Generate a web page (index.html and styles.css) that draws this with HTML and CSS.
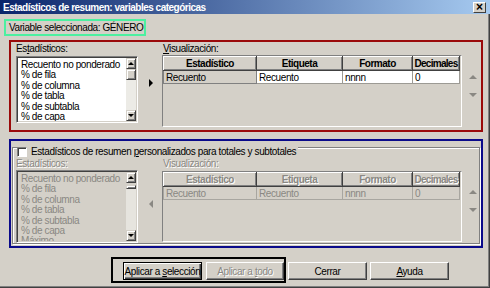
FILE: index.html
```html
<!DOCTYPE html>
<html lang="es">

<head>
    <meta charset="UTF-8">
    <title>Estadísticos de resumen</title>
    <link rel="stylesheet" href="styles.css">
</head>

<body>
    <div class="dialog">
        <div class="titlebar">
            <span class="title">Estadísticos de resumen: variables categóricas</span>
            <span class="close">×</span>
        </div>

        <div class="selected">Variable seleccionada: GÉNERO</div>

        <div class="panel panel-red">
            <div class="stats">
                <div class="label">Es<u>t</u>adísticos:</div>
                <div class="label label-vis"><u>V</u>isualización:</div>

                <div class="list">
                    <div class="items">
                        <div>Recuento no ponderado</div>
                        <div>% de fila</div>
                        <div>% de columna</div>
                        <div>% de tabla</div>
                        <div>% de subtabla</div>
                        <div>% de capa</div>
                        <div>% del N válido de fila</div>
                    </div>
                    <div class="scrollbar">
                        <span class="sbtn"><i class="tri-up"></i></span>
                        <span class="sbtn thumb"></span>
                        <span class="track"></span>
                        <span class="sbtn"><i class="tri-down"></i></span>
                    </div>
                </div>

                <div class="move"><i class="tri-right"></i></div>

                <div class="grid-box">
                    <table class="grid">
                        <tr>
                            <th class="c1">Estadístico</th>
                            <th class="c2">Etiqueta</th>
                            <th class="c3">Formato</th>
                            <th class="c4">Decimales</th>
                        </tr>
                        <tr>
                            <td class="name">Recuento</td>
                            <td>Recuento</td>
                            <td>nnnn</td>
                            <td>0</td>
                        </tr>
                    </table>
                </div>

                <div class="order">
                    <i class="tri-up"></i>
                    <i class="tri-down"></i>
                </div>
            </div>
        </div>

        <div class="panel panel-blue">
            <div class="group">
                <div class="group-head">
                    <span class="check"></span>
                    <span>Estadísticos de resumen <u>p</u>ersonalizados para totales y subtotales</span>
                </div>

                <div class="stats off">
                    <div class="label">Estadísticos:</div>
                    <div class="label label-vis">Visualización:</div>

                    <div class="list">
                        <div class="items">
                            <div>Recuento no ponderado</div>
                            <div>% de fila</div>
                            <div>% de columna</div>
                            <div>% de tabla</div>
                            <div>% de subtabla</div>
                            <div>% de capa</div>
                            <div>Máximo</div>
                        </div>
                        <div class="scrollbar">
                            <span class="sbtn"><i class="tri-up"></i></span>
                            <span class="sbtn thumb thin"></span>
                            <span class="track"></span>
                            <span class="sbtn"><i class="tri-down"></i></span>
                        </div>
                    </div>

                    <div class="move"><i class="tri-left"></i></div>

                    <div class="grid-box">
                        <table class="grid">
                            <tr>
                                <th class="c1">Estadístico</th>
                                <th class="c2">Etiqueta</th>
                                <th class="c3">Formato</th>
                                <th class="c4">Decimales</th>
                            </tr>
                            <tr>
                                <td class="name">Recuento</td>
                                <td>Recuento</td>
                                <td>nnnn</td>
                                <td>0</td>
                            </tr>
                        </table>
                    </div>

                    <div class="order">
                        <i class="tri-up"></i>
                        <i class="tri-down"></i>
                    </div>
                </div>
            </div>
        </div>

        <div class="buttons">
            <div class="apply-box">
                <button class="btn default">Aplicar a <u>s</u>elección</button>
                <button class="btn" disabled>Aplicar a <u>t</u>odo</button>
            </div>
            <button class="btn">Cerrar</button>
            <button class="btn"><u>A</u>yuda</button>
        </div>
    </div>
</body>

</html>
```

FILE: styles.css
```css
* {
    box-sizing: border-box;
}

body {
    margin: 0;
    background: #d4d0c8;
    font-family: "Liberation Sans", Arial, sans-serif;
    font-size: 10px;
    letter-spacing: -0.4px;
    color: #000;
}

.dialog {
    width: 490px;
    height: 288px;
    box-shadow: inset -1px -1px #404040, inset -2px -2px #808080;
}

/* title bar */
.titlebar {
    height: 14px;
    display: flex;
    align-items: center;
    justify-content: space-between;
    padding: 0 4px 0 3px;
    background: linear-gradient(to right, #0a246a, #a6caf0);
}

.title {
    color: #fff;
    font-weight: bold;
    letter-spacing: -0.5px;
}

.close {
    width: 13px;
    height: 11px;
    display: flex;
    align-items: center;
    justify-content: center;
    background: #d4d0c8;
    border: 1px solid;
    border-color: #fff #404040 #404040 #fff;
    font-size: 12px;
    font-weight: bold;
    line-height: 1;
    letter-spacing: 0;
}

.selected {
    width: 142px;
    height: 17px;
    margin: 5px 0 0 4px;
    padding-left: 3px;
    border: 2px solid #4cf0a0;
    line-height: 13px;
}

/* coloured frames */
.panel {
    width: 474px;
    margin-left: 9px;
    border: 2px solid;
}

.panel-red {
    height: 92px;
    margin-top: 4px;
    border-color: #9a0a0a;
    padding: 0 0 0 5px;
}

.panel-blue {
    height: 109px;
    margin-top: 7px;
    border-color: #0a0a8a;
    padding: 6px 1px 0;
}

/* statistics / display block */
.stats {
    display: grid;
    grid-template-columns: 122px 24px 300px 1fr;
    grid-template-rows: 13px auto;
}

.label {
    grid-row: 1;
    grid-column: 1;
    line-height: 13px;
}

.label-vis {
    grid-column: 3;
    padding-left: 1px;
}

.list {
    grid-row: 2;
    grid-column: 1;
    height: 67px;
    margin-top: 1px;
    display: flex;
    background: #fff;
    border: 1px solid;
    border-color: #808080 #fff #fff #808080;
    box-shadow: inset 1px 1px #404040, inset -1px -1px #d4d0c8;
    padding: 1px;
    overflow: hidden;
}

.items {
    flex: 1;
    padding: 2px 0 0 3px;
    line-height: 10.4px;
    white-space: nowrap;
    overflow: hidden;
}

.scrollbar {
    width: 10px;
    display: flex;
    flex-direction: column;
}

.track {
    flex: 1;
    background: #ecebe6;
}

.sbtn {
    height: 11px;
    display: flex;
    align-items: center;
    justify-content: center;
    background: #d4d0c8;
    border: 1px solid;
    border-color: #d4d0c8 #404040 #404040 #d4d0c8;
    box-shadow: inset 1px 1px #fff, inset -1px -1px #808080;
}

.thumb.thin {
    height: 4px;
    margin-top: 2px;
}

i {
    display: block;
    width: 0;
    height: 0;
}

.tri-up {
    border-left: 3px solid transparent;
    border-right: 3px solid transparent;
    border-bottom: 3px solid #000;
}

.tri-down {
    border-left: 3px solid transparent;
    border-right: 3px solid transparent;
    border-top: 3px solid #000;
}

.tri-right {
    border-top: 4px solid transparent;
    border-bottom: 4px solid transparent;
    border-left: 4px solid #000;
}

.tri-left {
    border-top: 4px solid transparent;
    border-bottom: 4px solid transparent;
    border-right: 4px solid #8a8883;
}

.move {
    grid-row: 2;
    grid-column: 2;
    padding: 24px 0 0 11px;
}

.off .move {
    padding-top: 30px;
}

.order {
    grid-row: 2;
    grid-column: 4;
    padding: 20px 0 0 7px;
}

.order .tri-up {
    border-width: 0 4px 4px;
    border-bottom-color: #8a8883;
}

.order .tri-down {
    margin-top: 14px;
    border-width: 4px 4px 0;
    border-top-color: #8a8883;
}

/* display grid */
.grid-box {
    grid-row: 2;
    grid-column: 3;
    height: 72px;
    border: 1px solid;
    border-color: #808080 #fff #fff #808080;
}

.grid {
    border-collapse: collapse;
    table-layout: fixed;
    width: 296px;
}

.grid th,
.grid td {
    padding: 0 0 0 2px;
    white-space: nowrap;
    overflow: hidden;
}

.grid th {
    height: 14px;
    padding: 0;
    text-align: center;
    font-weight: bold;
    letter-spacing: -0.5px;
    background: #d4d0c8;
    border: 1px solid;
    border-color: #fff #404040 #404040 #fff;
    box-shadow: inset -1px -1px #808080;
}

.grid th.c4 {
    letter-spacing: -0.7px;
}

.grid td {
    height: 13px;
    background: #fff;
    border: 1px solid #9c9a94;
    text-align: left;
}

.grid td.name {
    background: #d4d0c8;
    border-color: #808080;
}

.c1 { width: 93px; }
.c2 { width: 86px; }
.c3 { width: 70px; }
.c4 { width: 47px; }

/* disabled block */
.group {
    height: 97px;
    border: 1px solid #808080;
    box-shadow: inset 1px 1px #fff, 1px 1px #fff;
    padding: 0 0 0 3px;
}

.group-head {
    width: fit-content;
    height: 11px;
    margin: -2px 0 0 1px;
    display: flex;
    align-items: center;
    gap: 4px;
    padding-right: 2px;
    background: #d4d0c8;
}

.check {
    width: 10px;
    height: 10px;
    background: #fff;
    border: 1px solid;
    border-color: #808080 #fff #fff #808080;
    box-shadow: inset 1px 1px #404040;
}

.off {
    color: #8a8883;
}

.off .label {
    text-shadow: 1px 1px 0 #fff;
}

.off .list {
    height: 73px;
    background: #d4d0c8;
    margin-top: 0;
}

.off .items {
    padding-top: 2px;
}

.off .grid-box {
    height: 71px;
    margin-top: 1px;
}

.off .grid th {
    color: #8a8883;
    text-shadow: 1px 1px 0 #fff;
}

.off .grid td {
    background: #d4d0c8;
    border-color: #a8a6a0;
}

.off .track {
    background: #e6e4de;
}

/* buttons */
.buttons {
    display: flex;
    align-items: flex-start;
    margin: 9px 0 0 111px;
}

.apply-box {
    width: 175px;
    height: 26px;
    display: flex;
    gap: 4px;
    padding: 3px 0 0 10px;
    border: 2px solid #000;
    margin-right: 2px;
}

.btn {
    width: 79px;
    height: 18px;
    margin-top: 5px;
    padding: 0;
    font: inherit;
    letter-spacing: inherit;
    color: #000;
    background: #d4d0c8;
    border: 1px solid;
    border-color: #fff #404040 #404040 #fff;
    box-shadow: inset -1px -1px #808080;
}

.apply-box .btn {
    margin-top: 0;
}

.apply-box .btn + .btn {
    width: 78px;
    margin-left: 0;
}

.btn + .btn {
    margin-left: 3px;
}

.btn.default {
    border: 1px solid #000;
    box-shadow: inset 1px 1px #fff, inset -1px -1px #404040, inset -2px -2px #808080;
}

.btn:disabled {
    color: #8a8883;
    text-shadow: 1px 1px 0 #fff;
}
```
